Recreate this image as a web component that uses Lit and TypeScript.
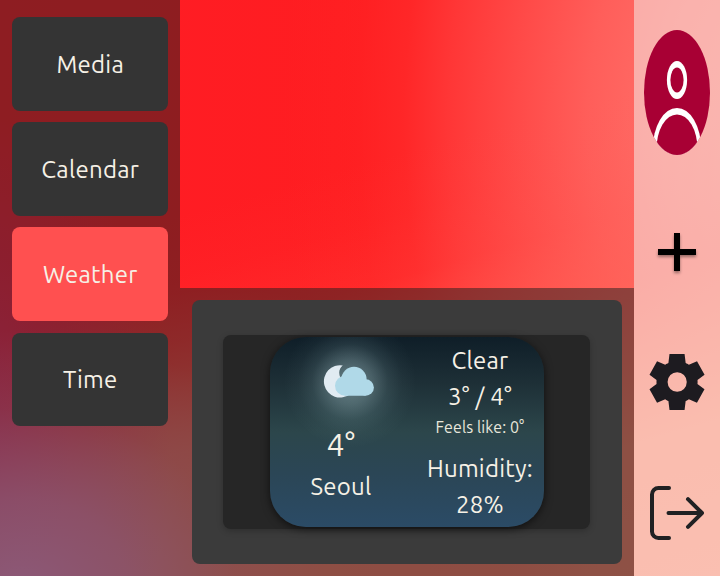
import { LitElement, html, css } from "lit";
import { customElement, property, state } from "lit/decorators.js";
import { classMap } from "lit/directives/class-map.js";

const fontStack = css`Ubuntu, "Noto Sans", "Open Sans", sans-serif`;

@customElement("widget-menu")
class WidgetMenu extends LitElement {
  @property() selected = "Weather";

  static styles = css`
    :host {
      display: grid;
      grid-template-rows: repeat(4, 1fr);
      row-gap: 11.6px;
      box-sizing: border-box;
      height: 443.4px;
      padding: 17px 12px;
    }
    .item {
      display: flex;
      align-items: center;
      justify-content: center;
      border: 0;
      border-radius: 8px;
      padding: 1.6px 0 0 0.5px;
      background: #343434;
      color: #f6f1e6;
      font: 24px/30px ${fontStack};
      letter-spacing: 0.25px;
    }
    .selected {
      background: #ff5050;
    }
  `;

  render() {
    return ["Media", "Calendar", "Weather", "Time"].map(
      (name) => html`<button
        class=${classMap({ item: true, selected: name === this.selected })}
        @click=${() => this.dispatchEvent(new CustomEvent("pick", { detail: name }))}
      >${name}</button>`
    );
  }
}

@customElement("weather-card")
class WeatherCard extends LitElement {
  static styles = css`
    :host {
      display: grid;
      grid-template-columns: 142px 1fr;
      width: 274px;
      height: 190px;
      border-radius: 36px;
      overflow: hidden;
      background:
        radial-gradient(circle at 80px 45px, rgba(190, 225, 230, 0.46) 0, rgba(180, 215, 220, 0.3) 22px, rgba(160, 200, 205, 0.13) 38px, rgba(160, 200, 205, 0.04) 52px, transparent 66px),
        linear-gradient(#0f1e28 0%, #1e3037 25%, #2c464b 50%, #2b4656 72%, #2b4b66 100%);
      box-shadow: 0 2px 9px rgba(0, 0, 0, 0.6);
      color: #f6f1e6;
      font-family: ${fontStack};
      letter-spacing: 0.25px;
      text-align: center;
      white-space: nowrap;
    }
    .now,
    .details {
      display: flex;
      flex-direction: column;
      align-items: center;
    }
    svg {
      display: block;
      margin: 26px 0 28px 16px;
    }
    .temp {
      font-size: 32px;
      line-height: 38px;
      margin-top: -2px;
    }
    .city {
      font-size: 24px;
      line-height: 30px;
      margin-top: 9px;
    }
    .details {
      padding: 9px 0 0 4px;
      font-size: 24px;
      line-height: 30px;
      width: 132px;
      box-sizing: border-box;
    }
    .range {
      margin-top: 6px;
    }
    .feels {
      font-size: 16px;
      line-height: 20px;
      margin-top: 5px;
      letter-spacing: 0.1px;
      color: #e8e7dc;
    }
    .humidity {
      margin-top: 17px;
    }
    .percent {
      margin-top: 6px;
    }
  `;

  render() {
    return html`
      <div class="now">
        <svg width="52" height="36" viewBox="0 0 52 36">
          <path fill="#e1ebf2" d="M19.800 2.400C16 5.300 15.200 10.500 17.500 15L24 18 27 31.200A16.200 16.200 0 1 1 19.800 2.400Z" />
          <g fill="#b0d9e8">
            <circle cx="22" cy="22.800" r="10" />
            <circle cx="31" cy="16.400" r="12.600" />
            <circle cx="42.600" cy="24.500" r="8.300" />
            <path d="M22 20H42.600V32.800H22Z" />
          </g>
        </svg>
        <div class="temp">4°</div>
        <div class="city">Seoul</div>
      </div>
      <div class="details">
        <div>Clear</div>
        <div class="range">3° / 4°</div>
        <div class="feels">Feels like: 0°</div>
        <div class="humidity">Humidity:</div>
        <div class="percent">28%</div>
      </div>
    `;
  }
}

@customElement("action-rail")
class ActionRail extends LitElement {
  static styles = css`
    :host {
      display: grid;
      grid-template-rows: 185px 134px 127px 134px;
      place-items: center;
      background: rgba(246, 248, 244, 0.5);
    }
    svg {
      display: block;
    }
    .plus {
      filter: drop-shadow(0 2px 1.5px rgba(0, 0, 0, 0.4));
    }
    .gear {
      margin-bottom: 1px;
    }
  `;

  render() {
    return html`
      <svg width="66" height="125" viewBox="0 0 66 125">
        <clipPath id="disc"><ellipse cx="33" cy="62.5" rx="33" ry="62.5" /></clipPath>
        <g clip-path="url(#disc)">
          <rect width="66" height="125" fill="#a80034" />
          <ellipse cx="33" cy="50" rx="10.1" ry="19" fill="#fff" />
          <ellipse cx="33" cy="50" rx="6.6" ry="12.5" fill="#a80034" />
          <ellipse cx="33" cy="119" rx="24.2" ry="41" fill="#fff" />
          <ellipse cx="33" cy="119" rx="20.5" ry="34.6" fill="#a80034" />
        </g>
      </svg>
      <svg class="plus" width="38" height="38" viewBox="0 0 38 38">
        <path d="M16 0h6v16h16v6H22v16h-6V22H0v-6h16Z" />
      </svg>
      <svg class="gear" width="56" height="56" viewBox="70.500 -880 818 800" preserveAspectRatio="none">
        <path fill="#1d1b20" d="m370-80-16-128q-13-5-24.5-12T307-235l-119 50L78-375l103-78q-1-7-1-13.5v-27q0-6.5 1-13.5L78-585l110-190 119 50q11-8 23-15t24-12l16-128h220l16 128q13 5 24.5 12t22.5 15l119-50 110 190-103 78q1 7 1 13.5v27q0 6.5-2 13.500l103 78-110 190-118-50q-11 8-23 15t-24 12L590-80H370Zm112-260q58 0 99-41t41-99q0-58-41-99t-99-41q-59 0-99.500 41T342-480q0 58 40.500 99t99.500 41Z" />
      </svg>
      <svg width="54" height="54" viewBox="0 0 54 54" fill="none" stroke="#202123" stroke-width="4" stroke-linecap="round" stroke-linejoin="round">
        <path d="M19 2H8.500A6.500 6.500 0 0 0 2 8.500V45.500A6.500 6.500 0 0 0 8.500 52H19M18.500 27H52M38 13.200 52 27 38 40.800" />
      </svg>
    `;
  }
}

@customElement("app-root")
class AppRoot extends LitElement {
  @state() selected = "Weather";

  static styles = css`
    :host {
      display: grid;
      grid-template-columns: 180px 454px 86px;
      grid-template-rows: 288px 288px;
      width: 720px;
      height: 576px;
      overflow: hidden;
      background:
        radial-gradient(ellipse 310px 260px at 20px 590px, rgba(250, 152, 215, 0.95) 0, rgba(250, 145, 205, 0.7) 35%, rgba(250, 120, 165, 0.24) 70%, transparent 100%),
        radial-gradient(ellipse 200px 340px at -30px 450px, rgba(240, 50, 135, 0.75) 0, rgba(240, 40, 130, 0.33) 50%, transparent 100%),
        radial-gradient(ellipse 380px 290px at 220px 580px, rgba(255, 130, 108, 0.9) 0, rgba(255, 122, 104, 0.75) 45%, rgba(255, 105, 92, 0.3) 75%, transparent 100%),
        linear-gradient(-16deg, #ff866e 0, rgba(255, 130, 106, 1) 20%, rgba(255, 116, 98, 0.84) 32%, rgba(255, 100, 88, 0.5) 41%, rgba(255, 90, 80, 0.17) 50%, rgba(255, 90, 80, 0.05) 58%, transparent 66%),
        radial-gradient(ellipse 400px 620px at 780px 120px, #ff7870 0, #ff6c66 30%, #ff5e5a 48%, #ff4a48 66%, #ff3636 83%, rgba(255, 44, 44, 0.65) 94%, rgba(255, 38, 38, 0.3) 106%, transparent 124%),
        linear-gradient(90deg, #ff1c26 0, #ff1d20 55%);
    }
    .side,
    .bottom {
      background: rgba(30, 30, 30, 0.5);
    }
    .side {
      grid-row: 1 / 3;
    }
    .rail {
      grid-column: 3;
      grid-row: 1 / 3;
    }
    .bottom {
      grid-column: 2;
      grid-row: 2;
      padding: 12px;
      display: flex;
    }
    .panel {
      flex: 1;
      display: flex;
      align-items: center;
      justify-content: center;
      border-radius: 8px;
      background: #3b3b3b;
    }
    .slot {
      display: flex;
      align-items: center;
      justify-content: center;
      width: 366px;
      height: 194px;
      margin-right: 1px;
      padding-left: 1px;
      border-radius: 8px;
      background: #262626;
      box-shadow: 0 2px 6px rgba(0, 0, 0, 0.22);
    }
  `;

  render() {
    return html`
      <div class="side">
        <widget-menu
          .selected=${this.selected}
          @pick=${(e: CustomEvent) => (this.selected = e.detail)}
        ></widget-menu>
      </div>
      <action-rail class="rail"></action-rail>
      <div class="bottom">
        <div class="panel">
          <div class="slot"><weather-card></weather-card></div>
        </div>
      </div>
    `;
  }
}
